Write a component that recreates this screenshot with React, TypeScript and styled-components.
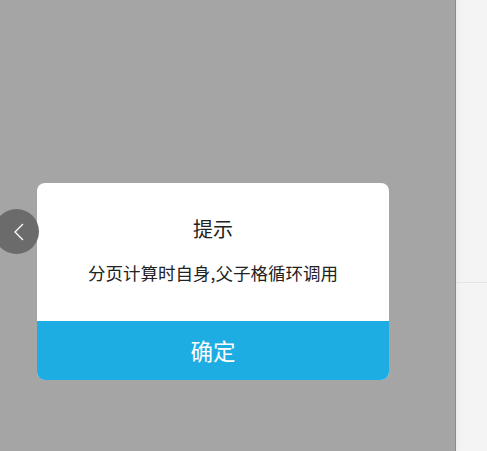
import React from "react";
import styled, { createGlobalStyle } from "styled-components";

const GlobalStyle = createGlobalStyle`
  html, body {
    margin: 0;
    padding: 0;
    height: 100%;
    overflow: hidden;
  }
  body {
    font-family: "Noto Sans CJK SC", "Noto Sans", sans-serif;
  }
  #root {
    height: 100%;
  }
`;

const Page = styled.div`
  display: flex;
  width: 487px;
  height: 451px;
`;

const Mask = styled.div`
  position: relative;
  flex: 0 0 456px;
  background-color: #a5a5a5;
  border-right: 1px solid #8a8a8a;
  padding: 183px 0 0 37px;
  box-sizing: border-box;
`;

const SidePanel = styled.div`
  flex: 1;
  display: flex;
  flex-direction: column;
  background: linear-gradient(to right, #ececec 0px, #f4f4f4 5px);
`;

const SideBlock = styled.div<{ $grow?: boolean }>`
  height: ${(p) => (p.$grow ? "auto" : "283px")};
  flex: ${(p) => (p.$grow ? 1 : "none")};
  border-bottom: ${(p) => (p.$grow ? "none" : "1px solid #e4e4e4")};
  box-sizing: border-box;
`;

const BackButton = styled.div`
  position: absolute;
  left: -6px;
  top: 209px;
  width: 45px;
  height: 45px;
  border-radius: 50%;
  background-color: #6b6b6b;
  display: flex;
  align-items: center;
  justify-content: center;
  padding-left: 4px;
  box-sizing: border-box;
`;

const Dialog = styled.div`
  width: 352px;
  border-radius: 8px;
  overflow: hidden;
  background-color: #ffffff;
`;

const DialogBody = styled.div`
  height: 138px;
  display: flex;
  flex-direction: column;
  align-items: center;
  padding-top: 33px;
  box-sizing: border-box;
`;

const Title = styled.div`
  font-size: 20px;
  line-height: 26px;
  color: #222222;
`;

const Message = styled.div`
  margin-top: 19px;
  font-size: 17.5px;
  line-height: 24px;
  color: #222222;
`;

const ConfirmButton = styled.div`
  height: 59px;
  padding-bottom: 1px;
  box-sizing: border-box;
  background-color: #1eade3;
  color: #ffffff;
  font-size: 22.5px;
  display: flex;
  align-items: center;
  justify-content: center;
`;

export default function App() {
  return (
    <Page>
      <GlobalStyle />
      <Mask>
        <Dialog>
          <DialogBody>
            <Title>提示</Title>
            <Message>分页计算时自身,父子格循环调用</Message>
          </DialogBody>
          <ConfirmButton>确定</ConfirmButton>
        </Dialog>
        <BackButton>
          <svg width="14" height="22" viewBox="0 0 14 22">
            <path d="M11 3 L3 11 L11 19" fill="none" stroke="#ffffff" strokeWidth="1.3" />
          </svg>
        </BackButton>
      </Mask>
      <SidePanel>
        <SideBlock />
        <SideBlock $grow />
      </SidePanel>
    </Page>
  );
}
